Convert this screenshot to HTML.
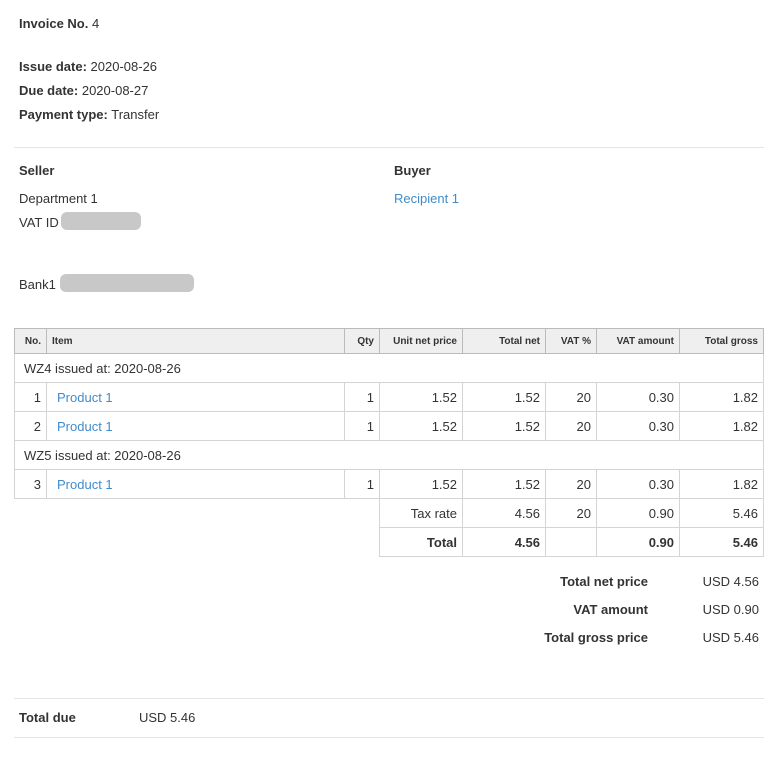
<!DOCTYPE html>
<html><head><style>
body{margin:0;width:778px;height:770px;background:#fff;font-family:"Liberation Sans",Arial,sans-serif;font-size:13px;color:#333;position:relative}
.a{position:absolute;white-space:nowrap}
b{font-weight:bold}
.l{color:#428bca}
.hr{position:absolute;left:14px;width:750px;height:1px;background:#e5e5e5}
table{position:absolute;left:14px;top:328px;width:749px;border-collapse:collapse;table-layout:fixed}
td{border:1px solid #d4d4d4;padding:0 5px;height:28px;text-align:right;font-size:13px}
th{border:1px solid #bbb;background:#efefef;height:24px;font-size:10px;font-weight:bold;text-align:right;padding:0 5px}
td.n{border:none;border-right:1px solid #d4d4d4}
</style></head><body>
<div class="a" style="left:19px;top:16px"><b>Invoice No.</b> 4</div>
<div class="a" style="left:19px;top:59px"><b>Issue date:</b> 2020-08-26</div>
<div class="a" style="left:19px;top:83px"><b>Due date:</b> 2020-08-27</div>
<div class="a" style="left:19px;top:107px"><b>Payment type:</b> Transfer</div>
<div class="hr" style="top:147px"></div>
<div class="a" style="left:19px;top:163px"><b>Seller</b></div>
<div class="a" style="left:394px;top:163px"><b>Buyer</b></div>
<div class="a" style="left:19px;top:191px">Department 1</div>
<div class="a l" style="left:394px;top:191px">Recipient 1</div>
<div class="a" style="left:19px;top:215px">VAT ID</div>
<div class="a" style="left:61px;top:212px;width:80px;height:18px;background:#c8c8c8;border-radius:6px"></div>
<div class="a" style="left:19px;top:277px">Bank1</div>
<div class="a" style="left:60px;top:274px;width:134px;height:18px;background:#c8c8c8;border-radius:6px"></div>
<table>
<colgroup><col style="width:32px"><col style="width:298px"><col style="width:35px"><col style="width:83px"><col style="width:83px"><col style="width:51px"><col style="width:83px"><col style="width:84px"></colgroup>
<tr><th>No.</th><th style="text-align:left">Item</th><th>Qty</th><th>Unit net price</th><th>Total net</th><th>VAT %</th><th>VAT amount</th><th>Total gross</th></tr>
<tr><td colspan="8" style="text-align:left;padding-left:9px">WZ4 issued at: 2020-08-26</td></tr>
<tr><td>1</td><td class="l" style="text-align:left;padding-left:10px">Product 1</td><td>1</td><td>1.52</td><td>1.52</td><td>20</td><td>0.30</td><td>1.82</td></tr>
<tr><td>2</td><td class="l" style="text-align:left;padding-left:10px">Product 1</td><td>1</td><td>1.52</td><td>1.52</td><td>20</td><td>0.30</td><td>1.82</td></tr>
<tr><td colspan="8" style="text-align:left;padding-left:9px">WZ5 issued at: 2020-08-26</td></tr>
<tr><td>3</td><td class="l" style="text-align:left;padding-left:10px">Product 1</td><td>1</td><td>1.52</td><td>1.52</td><td>20</td><td>0.30</td><td>1.82</td></tr>
<tr><td class="n" colspan="3"></td><td>Tax rate</td><td>4.56</td><td>20</td><td>0.90</td><td>5.46</td></tr>
<tr><td class="n" colspan="3"></td><td><b>Total</b></td><td><b>4.56</b></td><td></td><td><b>0.90</b></td><td><b>5.46</b></td></tr>
</table>
<div class="a" style="right:130px;top:574px"><b>Total net price</b></div>
<div class="a" style="right:19px;top:574px">USD 4.56</div>
<div class="a" style="right:130px;top:602px"><b>VAT amount</b></div>
<div class="a" style="right:19px;top:602px">USD 0.90</div>
<div class="a" style="right:130px;top:630px"><b>Total gross price</b></div>
<div class="a" style="right:19px;top:630px">USD 5.46</div>
<div class="hr" style="top:698px"></div>
<div class="a" style="left:19px;top:710px"><b>Total due</b></div>
<div class="a" style="left:139px;top:710px">USD 5.46</div>
<div class="hr" style="top:737px"></div>
</body></html>
